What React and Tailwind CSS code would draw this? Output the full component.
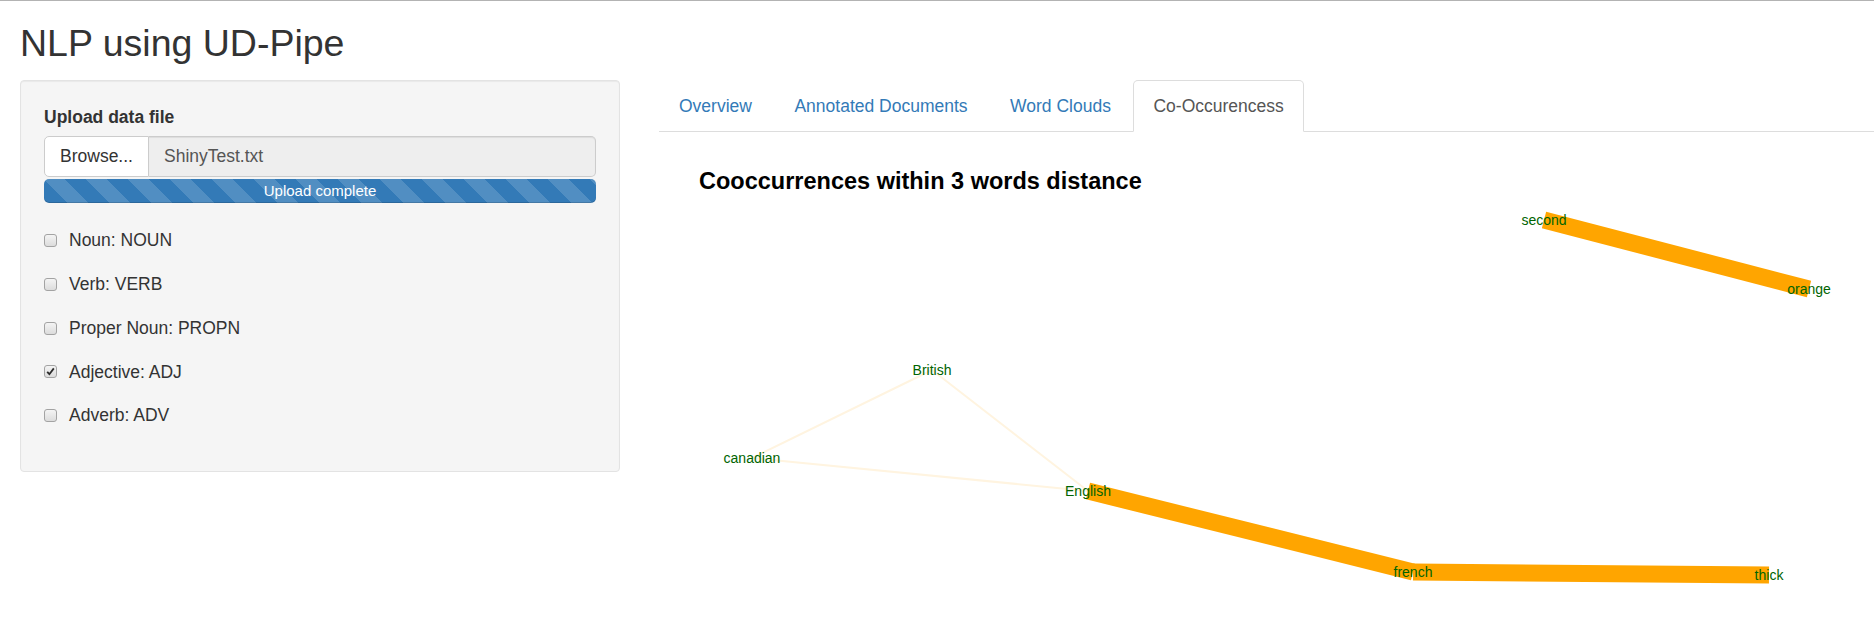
import React from 'react';

const posTags = [
  { id: 'noun', label: 'Noun: NOUN', checked: false },
  { id: 'verb', label: 'Verb: VERB', checked: false },
  { id: 'propn', label: 'Proper Noun: PROPN', checked: false },
  { id: 'adj', label: 'Adjective: ADJ', checked: true },
  { id: 'adv', label: 'Adverb: ADV', checked: false },
];

const tabs = ['Overview', 'Annotated Documents', 'Word Clouds', 'Co-Occurencess'];

// node positions are relative to the plot's top-left corner
const nodes = {
  second: [885, 88],
  orange: [1150, 157],
  British: [273, 238],
  canadian: [93, 326],
  English: [429, 359],
  french: [754, 440],
  thick: [1110, 443],
};

const edges = [
  { from: 'British', to: 'canadian', w: 2, color: '#fff4e0' },
  { from: 'British', to: 'English', w: 2, color: '#fff4e0' },
  { from: 'canadian', to: 'English', w: 2, color: '#fff4e0' },
  { from: 'second', to: 'orange', w: 17, color: '#ffa500' },
  { from: 'English', to: 'french', w: 17, color: '#ffa500' },
  { from: 'french', to: 'thick', w: 17, color: '#ffa500' },
];

function Checkbox({ checked }) {
  return (
    <span className="w-[13px] h-[13px] shrink-0 rounded-[3px] border border-[#a3a3a3] bg-gradient-to-b from-[#f4f4f4] to-[#dcdcdc] flex items-center justify-center">
      {checked && (
        <svg width="9" height="9" viewBox="0 0 9 9">
          <path d="M1.2 4.8 L3.4 7.2 L7.8 1.4" fill="none" stroke="#2b2b2b" strokeWidth="1.8" />
        </svg>
      )}
    </span>
  );
}

function CoocPlot() {
  return (
    <svg width="1215" height="494" className="block">
      <text x="40" y="57" fontSize="23.5" fontWeight="bold" fill="#000" fontFamily="'Liberation Sans', Arial, sans-serif">
        Cooccurrences within 3 words distance
      </text>
      {edges.map((e) => {
        const [x1, y1] = nodes[e.from];
        const [x2, y2] = nodes[e.to];
        return <line key={e.from + e.to} x1={x1} y1={y1} x2={x2} y2={y2} stroke={e.color} strokeWidth={e.w} />;
      })}
      {Object.entries(nodes).map(([name, [x, y]]) => (
        <text key={name} x={x} y={y} dy="0.35em" textAnchor="middle" fontSize="14" fill="#006400" fontFamily="'Liberation Sans', Arial, sans-serif">
          {name}
        </text>
      ))}
    </svg>
  );
}

export default function App() {
  return (
    <div className="w-[1874px] h-[625px] overflow-hidden bg-white border-t border-[#b3b3b3] text-[#333] font-['Liberation_Sans',Arial,sans-serif]">
      <div className="pl-[20px]">
        <h2 className="text-[37.5px] leading-[41px] mt-[22px] mb-[16px]">NLP using UD-Pipe</h2>

        <div className="flex items-start">
          {/* Sidebar */}
          <div className="w-[600px] shrink-0 bg-[#f5f5f5] border border-[#e3e3e3] rounded-[4px] shadow-[inset_0_1px_1px_rgba(0,0,0,0.05)] px-[23px] pt-[24px] pb-[43px]">
            <div className="text-[17.5px] leading-[25px] font-bold mb-[6px]">Upload data file</div>
            <div className="flex h-[41px] text-[17.5px]">
              <div className="w-[105px] bg-white border border-[#ccc] rounded-l-[5px] flex items-center justify-center">
                Browse...
              </div>
              <div className="flex-1 bg-[#eee] border border-l-0 border-[#ccc] rounded-r-[5px] shadow-[inset_0_1px_1px_rgba(0,0,0,0.075)] flex items-center px-[15px] text-[#555]">
                ShinyTest.txt
              </div>
            </div>
            <div className="mt-[2px] h-[24px] rounded-[5px] bg-[#337ab7] bg-[linear-gradient(45deg,rgba(255,255,255,0.15)_25%,transparent_25%,transparent_50%,rgba(255,255,255,0.15)_50%,rgba(255,255,255,0.15)_75%,transparent_75%,transparent)] bg-[length:42px_42px] shadow-[inset_0_-1px_0_rgba(0,0,0,0.15)] text-white text-[15px] leading-[24px] text-center">
              Upload complete
            </div>

            <div className="mt-[25px] flex flex-col gap-[18.75px]">
              {posTags.map((t) => (
                <label key={t.id} className="flex items-center gap-[12px] h-[25px] text-[17.5px]">
                  <Checkbox checked={t.checked} />
                  <span>{t.label}</span>
                </label>
              ))}
            </div>
          </div>

          {/* Main panel */}
          <div className="flex-1 ml-[39px]">
            <ul className="flex border-b border-[#ddd] text-[17.5px]">
              {tabs.map((tab, i) =>
                i === tabs.length - 1 ? (
                  <li key={tab} className="-mb-px mr-[2.5px] px-[19px] py-[12.5px] leading-[25px] bg-white border border-[#ddd] border-b-transparent rounded-t-[5px] text-[#555]">
                    {tab}
                  </li>
                ) : (
                  <li key={tab} className="-mb-px mr-[2.5px] px-[19px] py-[12.5px] leading-[25px] border border-transparent text-[#337ab7]">
                    {tab}
                  </li>
                )
              )}
            </ul>
            <CoocPlot />
          </div>
        </div>
      </div>
    </div>
  );
}
